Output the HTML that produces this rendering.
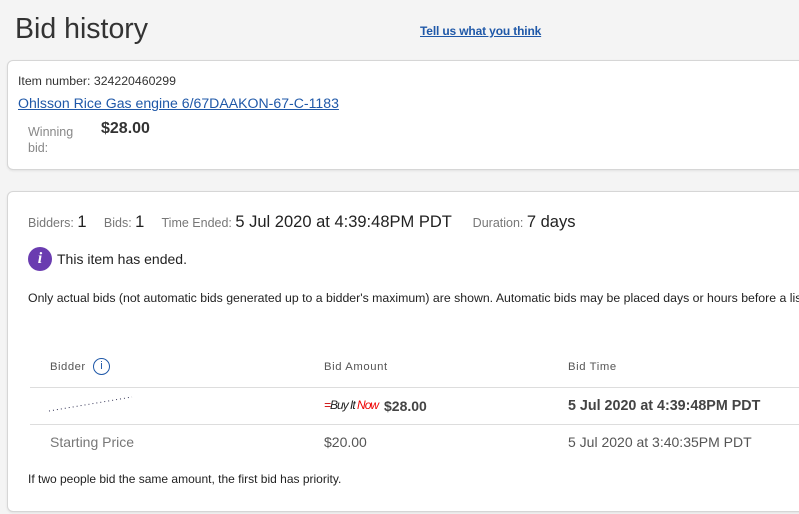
<!DOCTYPE html>
<html><head><meta charset="utf-8"><style>
*{margin:0;padding:0;box-sizing:border-box}
html,body{width:799px;height:514px;overflow:hidden}
body{background:#f4f4f4;font-family:"Liberation Sans",Arial,sans-serif;color:#333;position:relative}
#w{position:absolute;left:0;top:0;width:799px;height:514px;overflow:hidden}
.a{position:absolute;white-space:nowrap}
.card{position:absolute;background:#fff;border:1px solid #d6d6d6;border-radius:6px;box-shadow:0 1px 2px rgba(0,0,0,.08)}
.hr{position:absolute;height:1px;background:#ddd}
</style></head><body><div id="w">
<div class="a" style="left:15px;top:13px;font-size:28.5px;color:#333">Bid history</div>
<div class="a" style="left:420px;top:24px;font-size:12px;font-weight:bold;color:#1f58a8;text-decoration:underline;letter-spacing:-0.15px">Tell us what you think</div>

<div class="card" style="left:7px;top:60px;width:810px;height:110px"></div>
<div class="a" style="left:18px;top:74px;font-size:12.3px;color:#333">Item number: 324220460299</div>
<div class="a" style="left:18px;top:95px;font-size:14.1px;color:#1f58a8;text-decoration:underline">Ohlsson Rice Gas engine 6/67DAAKON-67-C-1183</div>
<div class="a" style="left:28px;top:124px;font-size:12.5px;color:#888;line-height:16px;white-space:normal;width:60px">Winning bid:</div>
<div class="a" style="left:101px;top:120px;font-size:16px;font-weight:bold;color:#333">$28.00</div>

<div class="card" style="left:7px;top:191px;width:810px;height:321px"></div>
<div class="a" style="left:28px;top:213px;font-size:12.5px;color:#777">Bidders: <span style="font-size:16.5px;color:#222">1</span>&nbsp;&nbsp;&nbsp;&nbsp; Bids: <span style="font-size:16.5px;color:#222">1</span>&nbsp;&nbsp;&nbsp;&nbsp; Time Ended: <span style="font-size:16.5px;color:#222">5 Jul 2020 at 4:39:48PM PDT</span>&nbsp;&nbsp;&nbsp;&nbsp;&nbsp; Duration: <span style="font-size:16.5px;color:#222">7 days</span></div>
<div class="a" style="left:28px;top:247px;width:24px;height:24px;border-radius:50%;background:#6a3cb0;color:#fff;font:italic bold 16px/24px 'Liberation Serif',serif;text-align:center">i</div>
<div class="a" style="left:57px;top:251px;font-size:14px;color:#222">This item has ended.</div>
<div class="a" style="left:28px;top:291px;font-size:12.3px;color:#222">Only actual bids (not automatic bids generated up to a bidder's maximum) are shown. Automatic bids may be placed days or hours before a listing ends.</div>

<div class="a" style="left:50px;top:361px;font-size:11.3px;color:#555;letter-spacing:.5px">Bidder</div>
<div class="a" style="left:93px;top:358px;width:17px;height:17px;border:1.5px solid #1f58a8;border-radius:50%;color:#1f58a8;font-size:11px;line-height:14px;text-align:center">i</div>
<div class="a" style="left:324px;top:361px;font-size:11.3px;color:#555;letter-spacing:.6px">Bid Amount</div>
<div class="a" style="left:568px;top:361px;font-size:11.3px;color:#555;letter-spacing:.6px">Bid Time</div>
<div class="hr" style="left:30px;top:387px;width:770px"></div>
<svg class="a" style="left:48px;top:395px" width="86" height="18"><line x1="1" y1="16" x2="84" y2="2" stroke="#335" stroke-width="1" stroke-dasharray="1 3"/></svg>
<div class="a" style="left:324px;top:398px;font:italic 12px 'Liberation Sans',sans-serif;letter-spacing:-1px"><span style="color:#c00">=</span><span style="color:#222">Buy It </span><span style="color:#e00">Now</span></div>
<div class="a" style="left:384px;top:398px;font-size:14px;font-weight:bold;color:#444">$28.00</div>
<div class="a" style="left:568px;top:398px;font-size:14.3px;font-weight:bold;color:#444">5 Jul 2020 at 4:39:48PM PDT</div>
<div class="hr" style="left:30px;top:424px;width:770px"></div>
<div class="a" style="left:50px;top:434px;font-size:14px;color:#777">Starting Price</div>
<div class="a" style="left:324px;top:434px;font-size:14px;color:#555">$20.00</div>
<div class="a" style="left:568px;top:434px;font-size:14px;color:#555">5 Jul 2020 at 3:40:35PM PDT</div>
<div class="a" style="left:28px;top:472px;font-size:12px;color:#222">If two people bid the same amount, the first bid has priority.</div>
</div></body></html>
